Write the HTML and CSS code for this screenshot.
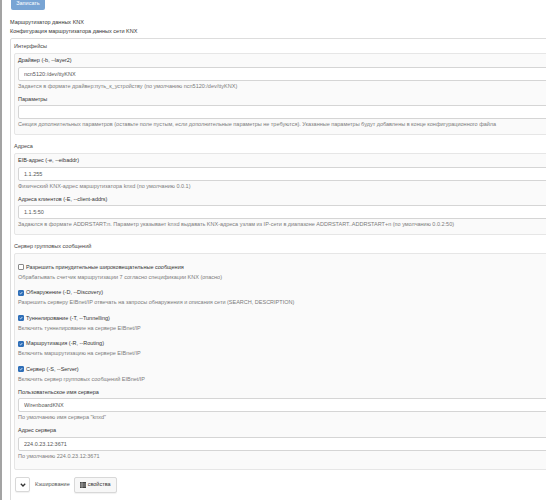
FILE: index.html
```html
<!DOCTYPE html>
<html lang="ru">
  <head>
    <meta charset="UTF-8" />
    <title>Маршрутизатор данных KNX</title>
    <link rel="stylesheet" href="styles.css">
  </head>

  <body>
    <div class="page">
      <button class="btn-save" type="button">Записать</button>

      <div class="intro">
        <div>Маршрутизатор данных KNX</div>
        <div>Конфигурация маршрутизатора данных сети KNX</div>
      </div>

      <div class="panel">
        <!-- Интерфейсы -->
        <div class="section">
          <div class="section-title">Интерфейсы</div>
          <div class="well">
            <div class="group">
              <label class="label">Драйвер (-b, --layer2)</label>
              <input class="input" type="text" value="ncn5120:/dev/ttyKNX" />
              <div class="help">Задается в формате драйвер:путь_к_устройству (по умолчанию ncn5120:/dev/ttyKNX)</div>
            </div>
            <div class="group">
              <label class="label">Параметры</label>
              <input class="input" type="text" value="" />
              <div class="help">Секция дополнительных параметров (оставьте поле пустым, если дополнительные параметры не требуются). Указанные параметры будут добавлены в конце конфигурационного файла</div>
            </div>
          </div>
        </div>

        <!-- Адреса -->
        <div class="section">
          <div class="section-title">Адреса</div>
          <div class="well">
            <div class="group">
              <label class="label">EIB-адрес (-e, --eibaddr)</label>
              <input class="input" type="text" value="1.1.255" />
              <div class="help">Физический KNX-адрес маршрутизатора knxd (по умолчанию 0.0.1)</div>
            </div>
            <div class="group">
              <label class="label">Адреса клиентов (-E, --client-addrs)</label>
              <input class="input" type="text" value="1.1.5:50" />
              <div class="help">Задаются в формате ADDRSTART:n. Параметр указывает knxd выдавать KNX-адреса узлам из IP-сети в диапазоне ADDRSTART..ADDRSTART+n (по умолчанию 0.0.2:50)</div>
            </div>
          </div>
        </div>

        <!-- Сервер групповых сообщений -->
        <div class="section">
          <div class="section-title">Сервер групповых сообщений</div>
          <div class="well well-server">
            <div class="check-group">
              <label class="check-label"><span class="check"></span>Разрешить принудительные широковещательные сообщения</label>
              <div class="help">Обрабатывать счетчик маршрутизации 7 согласно спецификации KNX (опасно)</div>
            </div>
            <div class="check-group">
              <label class="check-label"><span class="check on"></span>Обнаружение (-D, --Discovery)</label>
              <div class="help">Разрешить серверу EIBnet/IP отвечать на запросы обнаружения и описания сети (SEARCH, DESCRIPTION)</div>
            </div>
            <div class="check-group">
              <label class="check-label"><span class="check on"></span>Туннелирование (-T, --Tunnelling)</label>
              <div class="help">Включить туннелирование на сервере EIBnet/IP</div>
            </div>
            <div class="check-group">
              <label class="check-label"><span class="check on"></span>Маршрутизация (-R, --Routing)</label>
              <div class="help">Включить маршрутизацию на сервере EIBnet/IP</div>
            </div>
            <div class="check-group last">
              <label class="check-label"><span class="check on"></span>Сервер (-S, --Server)</label>
              <div class="help">Включить сервер групповых сообщений EIBnet/IP</div>
            </div>
            <div class="group">
              <label class="label">Пользовательское имя сервера</label>
              <input class="input" type="text" value="WirenboardKNX" />
              <div class="help">По умолчанию имя сервера "knxd"</div>
            </div>
            <div class="group">
              <label class="label">Адрес сервера</label>
              <input class="input" type="text" value="224.0.23.12:3671" />
              <div class="help">По умолчанию 224.0.23.12:3671</div>
            </div>
          </div>
        </div>

        <div class="footer-row">
          <button class="btn btn-toggle" type="button">
            <svg width="6" height="4" viewBox="0 0 6 4">
              <polyline points="0.8,0.8 3,3 5.2,0.8" fill="none" stroke="#333" stroke-width="1.3" />
            </svg>
          </button>
          <span class="footer-text">Кэширование</span>
          <button class="btn btn-props" type="button">
            <svg width="6" height="6" viewBox="0 0 6 6">
              <rect x="0" y="0" width="6" height="6" fill="#444" />
              <line x1="0" y1="2" x2="6" y2="2" stroke="#ddd" stroke-width="0.5" />
              <line x1="0" y1="4" x2="6" y2="4" stroke="#ddd" stroke-width="0.5" />
              <line x1="2" y1="0" x2="2" y2="6" stroke="#ddd" stroke-width="0.5" />
            </svg>
            свойства
          </button>
        </div>
      </div>
    </div>
  </body>
</html>
```

FILE: styles.css
```css
* {
  margin: 0;
  padding: 0;
  box-sizing: border-box;
}

html,
body {
  height: 100%;
}

body {
  overflow: hidden;
  background: #fff;
  font-family: "Liberation Sans", Arial, sans-serif;
  font-size: 5.5px;
  line-height: 9px;
  color: #333;
}

.page {
  width: 640px;
  min-height: 100%;
  padding-left: 8px;
  border-left: 2px solid #a3a3a3;
}

/* top button, cut by the window edge */
.btn-save {
  display: block;
  width: 34px;
  height: 14px;
  margin: -4px 0 0 1px;
  border: 0;
  border-radius: 2px;
  background: #78a4d4;
  color: #fff;
  font: inherit;
}

.intro {
  margin-top: 8px;
}

.panel {
  margin-top: 2px;
  padding: 3px 3px 40px;
  border: 1px solid #ddd;
  border-radius: 2px;
}

.section + .section {
  margin-top: 7px;
}

.section-title {
  margin-bottom: 2px;
  color: #444;
}

.well {
  padding: 2px 3px 5px;
  border: 1px solid #e6e6e6;
  border-radius: 2px;
  background: #fafafa;
}

.well-server {
  padding-bottom: 8px;
}

.group + .group {
  margin-top: 4px;
}

.label {
  display: block;
  margin-bottom: 1.5px;
}

.input {
  display: block;
  width: 100%;
  height: 14px;
  padding: 0 5px;
  border: 1px solid #d5d5d5;
  border-radius: 2px;
  background: #fff;
  color: #555;
  font: inherit;
  outline: none;
}

.help {
  margin-top: 1px;
  color: #7a7a7a;
}

/* checkboxes */
.check-group {
  margin-bottom: 6.5px;
}

.check-group:first-child {
  margin-top: 6.5px;
}

.check-group.last {
  margin-bottom: 4px;
}

.check-label {
  display: flex;
  align-items: center;
  gap: 2px;
}

.check {
  width: 6px;
  height: 6px;
  border: 1px solid #8a8a8a;
  border-radius: 1px;
  background: #fff;
}

.check.on {
  border-color: #2f6fb8;
  background: #2f6fb8 url("data:image/svg+xml,%3Csvg xmlns='http://www.w3.org/2000/svg' viewBox='0 0 6 6'%3E%3Cpolyline points='1,3.2 2.4,4.5 5,1.5' fill='none' stroke='white' stroke-width='1.1'/%3E%3C/svg%3E") center / 100% no-repeat;
}

/* bottom row */
.footer-row {
  display: flex;
  align-items: center;
  margin: 7px 0 0 1px;
}

.btn {
  display: flex;
  align-items: center;
  justify-content: center;
  height: 15px;
  border: 1px solid #d8d8d8;
  border-radius: 2px;
  background: #fff;
  color: #333;
  font: inherit;
  box-shadow: 0 1px 1px rgba(0, 0, 0, 0.06);
}

.btn-toggle {
  width: 15px;
}

.footer-text {
  margin: 0 4px 0 5px;
  color: #555;
}

.btn-props {
  gap: 2px;
  height: 16px;
  padding: 0 5px;
  background: #f7f7f7;
}
```
